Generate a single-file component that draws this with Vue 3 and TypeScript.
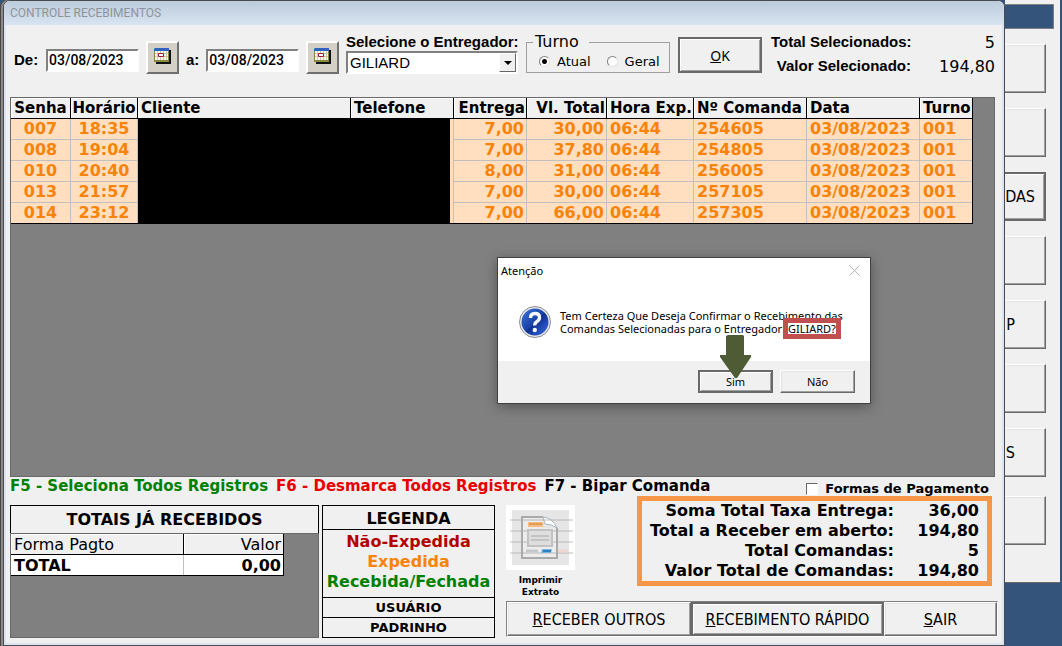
<script setup lang="ts">
import { ref } from 'vue'

interface Order {
  ticket: string
  time: string
  fee: string
  total: string
  dispatched: string
  number: string
  date: string
  shift: string
}

const orders: Order[] = [
  { ticket: '007', time: '18:35', fee: '7,00', total: '30,00', dispatched: '06:44', number: '254605', date: '03/08/2023', shift: '001' },
  { ticket: '008', time: '19:04', fee: '7,00', total: '37,80', dispatched: '06:44', number: '254805', date: '03/08/2023', shift: '001' },
  { ticket: '010', time: '20:40', fee: '8,00', total: '31,00', dispatched: '06:44', number: '256005', date: '03/08/2023', shift: '001' },
  { ticket: '013', time: '21:57', fee: '7,00', total: '30,00', dispatched: '06:44', number: '257105', date: '03/08/2023', shift: '001' },
  { ticket: '014', time: '23:12', fee: '7,00', total: '66,00', dispatched: '06:44', number: '257305', date: '03/08/2023', shift: '001' },
]

const summary = [
  { label: 'Soma Total Taxa Entrega:', value: '36,00' },
  { label: 'Total a Receber em aberto:', value: '194,80' },
  { label: 'Total Comandas:', value: '5' },
  { label: 'Valor Total de Comandas:', value: '194,80' },
]

const menu = ['', '', 'DAS', '', 'P', '', 'S', '']

const dateFrom = ref('03/08/2023')
const dateTo = ref('03/08/2023')
const courier = ref('GILIARD')
const shift = ref('atual')
const byPayment = ref(false)
</script>

<template>
  <div class="desktop">
    <main class="window">
      <header class="titlebar">CONTROLE RECEBIMENTOS</header>

      <form class="filters" @submit.prevent>
        <div class="dates">
          <label class="lbl" for="from">De:</label>
          <input id="from" v-model="dateFrom" class="sunken date" type="text" />
          <button class="calendar" type="button" aria-label="Escolher data inicial">
            <svg width="17" height="16" viewBox="0 0 17 16">
              <path d="M2 2h15v14H2z" fill="#111" />
              <path d="M0 1h15v13H0z" fill="#8a8a3c" />
              <path d="M1 3h13v9H1z" fill="#fffff0" />
              <path d="M0 1l1-1h14v3H0z" fill="#2f62c4" />
              <path d="M1 5.5h13M1 8.5h13M3.500 3v9M6.500 3v9M9.500 3v9M12.500 3v9" stroke="#c9c9a0" />
              <path d="M4.500 5.500h5v3h-5z" fill="#fff" stroke="#a81838" />
            </svg>
          </button>
          <label class="lbl" for="to">a:</label>
          <input id="to" v-model="dateTo" class="sunken date" type="text" />
          <button class="calendar" type="button" aria-label="Escolher data final">
            <svg width="17" height="16" viewBox="0 0 17 16">
              <path d="M2 2h15v14H2z" fill="#111" />
              <path d="M0 1h15v13H0z" fill="#8a8a3c" />
              <path d="M1 3h13v9H1z" fill="#fffff0" />
              <path d="M0 1l1-1h14v3H0z" fill="#2f62c4" />
              <path d="M1 5.5h13M1 8.5h13M3.500 3v9M6.500 3v9M9.500 3v9M12.500 3v9" stroke="#c9c9a0" />
              <path d="M4.500 5.500h5v3h-5z" fill="#fff" stroke="#a81838" />
            </svg>
          </button>
        </div>

        <div class="courier">
          <label class="lbl" for="courier">Selecione o Entregador:</label>
          <div class="combo sunken">
            <select id="courier" v-model="courier">
              <option>GILIARD</option>
            </select>
            <span class="drop" aria-hidden="true"><svg width="8" height="4" viewBox="0 0 8 4"><path d="M0 0h8L4 4z" fill="#000" /></svg></span>
          </div>
        </div>

        <fieldset class="shift">
          <legend>Turno</legend>
          <label><input v-model="shift" type="radio" name="shift" value="atual" />Atual</label>
          <label><input v-model="shift" type="radio" name="shift" value="geral" />Geral</label>
        </fieldset>

        <button class="btn default ok" type="submit"><span><u>O</u>K</span></button>

        <dl class="selected">
          <div><dt>Total Selecionados:</dt><dd>5</dd></div>
          <div><dt>Valor Selecionado:</dt><dd>194,80</dd></div>
        </dl>
      </form>

      <section class="orders">
        <table>
          <colgroup>
            <col class="w60" /><col class="w67" /><col /><col class="w103" /><col class="w73" />
            <col class="w80" /><col class="w87" /><col class="w113" /><col class="w113" /><col class="w53" />
          </colgroup>
          <thead>
            <tr>
              <th class="c">Senha</th><th class="c">Horário</th><th>Cliente</th><th>Telefone</th>
              <th class="r">Entrega</th><th class="r">Vl. Total</th><th>Hora Exp.</th>
              <th>Nº Comanda</th><th>Data</th><th>Turno</th>
            </tr>
          </thead>
          <tbody>
            <tr v-for="o in orders" :key="o.number">
              <td class="c">{{ o.ticket }}</td>
              <td class="c">{{ o.time }}</td>
              <td class="hidden"></td>
              <td class="hidden-part"></td>
              <td class="r">{{ o.fee }}</td>
              <td class="r">{{ o.total }}</td>
              <td>{{ o.dispatched }}</td>
              <td>{{ o.number }}</td>
              <td>{{ o.date }}</td>
              <td>{{ o.shift }}</td>
            </tr>
          </tbody>
        </table>
      </section>

      <div class="hints">
        <span class="green">F5 - Seleciona Todos Registros</span>
        <span class="red">F6 - Desmarca Todos Registros</span>
        <span>F7 - Bipar Comanda</span>
        <label class="payment"><input v-model="byPayment" type="checkbox" />Formas de Pagamento</label>
      </div>

      <footer class="bottom">
        <section class="received">
          <h2>TOTAIS JÁ RECEBIDOS</h2>
          <div class="received-body">
            <table>
              <thead><tr><th>Forma Pagto</th><th class="r">Valor</th></tr></thead>
              <tbody><tr><td>TOTAL</td><td class="r">0,00</td></tr></tbody>
            </table>
          </div>
        </section>

        <section class="key">
          <h2>LEGENDA</h2>
          <ul>
            <li class="dark-red">Não-Expedida</li>
            <li class="orange">Expedida</li>
            <li class="green">Recebida/Fechada</li>
          </ul>
          <p>USUÁRIO</p>
          <p>PADRINHO</p>
        </section>

        <section class="side">
          <div class="side-top">
            <button class="print" type="button">
              <svg width="69" height="65" viewBox="0 0 69 65">
                <path d="M0 0h69v65H0z" fill="#fff" />
                <path d="M6 5h57v55H6z" fill="#e6e6e6" />
                <path d="M16 12h24l11 10v31H16z" fill="#ececec" stroke="#aaa" stroke-width="2" />
                <path d="M37 11h15v12H37z" fill="#e6e6e6" />
                <path d="M37 12q10 1 14 11-5-4-12-4z" fill="#fff" stroke="#a9b4be" />
                <path d="M4 15h63M4 26h63M4 37h63M4 48h63" stroke="#aaa" stroke-opacity=".75" />
                <path d="M22 25h24v16H22z" fill="#dedede" stroke="#c2c2c2" stroke-width="2" />
                <path d="M25 31h18M25 35h18" stroke="#aaa" />
                <path d="M22 17h15v5H22z" fill="#f3bd83" />
                <path d="M23 19h13" stroke="#e59b50" stroke-width="2" />
                <path d="M36 44h10l-1 4H35z" fill="#79b4df" />
                <path d="M37 46h8" stroke="#2a82c5" stroke-width="2" />
                <path d="M20 46h12" stroke="#c4c8ca" stroke-width="3" />
                <path d="M52 46h10" stroke="#f1d5d0" stroke-width="3" />
              </svg>
              <span>Imprimir<br />Extrato</span>
            </button>
            <table class="summary">
              <tbody>
                <tr v-for="s in summary" :key="s.label">
                  <th scope="row">{{ s.label }}</th>
                  <td>{{ s.value }}</td>
                </tr>
              </tbody>
            </table>
          </div>
          <div class="actions">
            <button class="btn others" type="button"><span><u>R</u>ECEBER OUTROS</span></button>
            <button class="btn default quick" type="button"><span><u>R</u>ECEBIMENTO RÁPIDO</span></button>
            <button class="btn exit" type="button"><span><u>S</u>AIR</span></button>
          </div>
        </section>
      </footer>

      <div class="dialog" role="dialog" aria-labelledby="dialog-title">
        <div class="dialog-title">
          <span id="dialog-title">Atenção</span>
          <button type="button" aria-label="Fechar">
            <svg width="11" height="11" viewBox="0 0 11 11"><path d="M.5.5l10 10M10.500.5l-10 10" stroke="#b4b4b4" /></svg>
          </button>
        </div>
        <div class="dialog-body">
          <svg width="32" height="32" viewBox="0 0 32 32">
            <defs>
              <linearGradient id="ball" x1="0" y1="0" x2="1" y2="1">
                <stop offset="0" stop-color="#3d77dc" />
                <stop offset=".5" stop-color="#1740a6" />
                <stop offset=".52" stop-color="#0f2f8c" />
                <stop offset="1" stop-color="#3f6ff0" />
              </linearGradient>
            </defs>
            <circle cx="16" cy="16" r="15.500" fill="#e9ebee" stroke="#8a8d94" />
            <circle cx="16" cy="16" r="13.500" fill="url(#ball)" />
            <path d="M11.500 12q0-4.500 4.500-4.500t4.500 4q0 2.500-2.500 4t-2.200 4" fill="none" stroke="#f4f6fa" stroke-width="3.400" />
            <circle cx="15.800" cy="24" r="2.200" fill="#f4f6fa" />
          </svg>
          <p>Tem Certeza Que Deseja Confirmar o Recebimento das<br />Comandas Selecionadas para o Entregador: <span class="name">GILIARD?</span></p>
        </div>
        <div class="dialog-actions">
          <button class="btn default" type="button">Sim</button>
          <button class="btn" type="button">Não</button>
        </div>
        <svg class="arrow" width="32" height="44" viewBox="0 0 32 44"><path d="M8 0h15l1 1v19h7v2L17 43h-2L0 22v-2h6V1z" fill="#4f5b35" /></svg>
      </div>
    </main>

    <aside class="behind">
      <div class="behind-panel">
        <div class="band"></div>
        <button v-for="(m, i) in menu" :key="i" class="btn" :class="{ default: m === 'DAS' }" type="button"><span>{{ m }}</span></button>
      </div>
    </aside>
  </div>
</template>

<style>
body {
  margin: 0;
}
</style>

<style scoped>
* {
  box-sizing: border-box;
}
.desktop {
  display: grid;
  grid-template-columns: minmax(0, 1fr) 57px;
  min-height: 100vh;
  background: #34547c;
  color: #000;
  font-family: "DejaVu Sans", sans-serif;
}
.window {
  position: relative;
  display: flex;
  flex-direction: column;
  margin-left: 3px;
  padding: 0 9px 7px 6px;
  background: #f0f0f0;
  border: 1px solid #4a4a52;
  border-radius: 7px 7px 0 0;
  box-shadow: inset -2px -2px #dbe5f2, inset 2px 0 #dbe5f2, -2px 0 #8b8888, -3px 0 #4a4646;
}
.titlebar {
  height: 24px;
  margin: 0 -9px 0 -6px;
  padding-left: 6px;
  border-radius: 6px 6px 0 0;
  background: linear-gradient(#bccbdb, #d8e4f1);
  color: #8f9499;
  font: 12px/25px "Roboto", sans-serif;
}
h2, p, ul, dl, dd {
  margin: 0;
  padding: 0;
}
button, input, select {
  margin: 0;
  color: #000;
  font-family: inherit;
}
.btn {
  padding: 0;
  background: #f0f0f0;
  border: 1px solid;
  border-color: #fff #696969 #696969 #fff;
  border-radius: 0;
  box-shadow: inset -1px -1px #a0a0a0, inset 1px 1px #e3e3e3;
}
.btn.default {
  border: 2px solid #696969;
  box-shadow: inset 1px 1px #fff, inset -1px -1px #a0a0a0;
}
.lbl {
  font: bold 15px/16px "Liberation Sans", sans-serif;
}
.sunken {
  border: 2px solid;
  border-color: #808080 #fff #fff #808080;
  border-radius: 0;
  background: #fff;
}
.filters {
  display: flex;
  align-items: flex-start;
  height: 72px;
  padding: 9px 0 0 4px;
}
.dates {
  display: flex;
  align-items: center;
  gap: 7px;
  height: 52px;
  width: 332px;
}
.dates .lbl:first-child {
  min-width: 25px;
}
.date {
  width: 93px;
  height: 23px;
  padding: 0 1px;
  font: 500 14px "Roboto", sans-serif;
}
.calendar {
  display: grid;
  place-items: center;
  width: 33px;
  height: 33px;
  margin-top: -5px;
  padding: 0 0 4px;
  background: #d4d0c8;
  border: 2px solid;
  border-color: #fff #707070 #707070 #fff;
}
.courier {
  width: 180px;
  margin-top: -2px;
}
.combo {
  position: relative;
  width: 172px;
  height: 23px;
}
.combo select {
  width: 100%;
  height: 19px;
  padding: 0 2px;
  appearance: none;
  border: 0;
  background: transparent;
  font: 15px "Liberation Sans", sans-serif;
}
.drop {
  position: absolute;
  top: 0;
  right: 0;
  display: grid;
  place-items: center;
  width: 17px;
  height: 19px;
  background: #f0f0f0;
  border: 1px solid;
  border-color: #fff #696969 #696969 #fff;
  pointer-events: none;
}
.shift {
  display: flex;
  gap: 16px;
  width: 144px;
  height: 40px;
  margin: -1px 8px 0 0;
  padding: 0 0 0 12px;
  border: 1px solid #a0a0a0;
}
.shift legend {
  margin-left: -6px;
  padding: 0 10px 0 2px;
  font-size: 16px;
  line-height: 18px;
}
.shift label {
  display: flex;
  align-items: center;
  gap: 7px;
  height: 20px;
  font-size: 13px;
}
.shift input {
  width: 11px;
  height: 11px;
  appearance: none;
  background: #fff;
  border: 1px solid;
  border-color: #808080 #e3e3e3 #e3e3e3 #808080;
  border-radius: 50%;
}
.shift input:checked {
  background: radial-gradient(circle, #000 2px, #fff 3px);
}
.ok {
  width: 84px;
  height: 36px;
  margin-top: 3px;
  font: 14px "Noto Sans", sans-serif;
}
.selected {
  flex: 1;
  padding-left: 9px;
}
.selected div {
  display: flex;
  justify-content: space-between;
  height: 24px;
}
.selected dt {
  width: 140px;
  text-align: right;
  white-space: nowrap;
  font: bold 15px/16px "Liberation Sans", sans-serif;
}
.selected dd {
  font-size: 16px;
  line-height: 18px;
}
.orders {
  flex: 1;
  min-height: 380px;
  background: #808080;
  border: 1px solid #696969;
}
table {
  border-collapse: separate;
  border-spacing: 0;
}
.orders table {
  width: calc(100% - 21px);
  table-layout: fixed;
  border-bottom: 1px solid #000;
  border-right: 1px solid #000;
}
.w60 { width: 60px; }
.w67 { width: 67px; }
.w103 { width: 103px; }
.w73 { width: 73px; }
.w80 { width: 80px; }
.w87 { width: 87px; }
.w113 { width: 113px; }
.w53 { width: 52px; }
.orders th, .orders td {
  height: 21px;
  padding: 0 2px 0 3px;
  text-align: left;
  white-space: nowrap;
  font-weight: bold;
}
.orders th {
  padding-right: 1px;
  background: #f0f0f0;
  border-right: 1px solid #000;
  border-bottom: 1px solid #000;
  box-shadow: inset 1px 1px #fff;
  font-size: 15px;
  line-height: 20px;
}
.orders td {
  background: #ffdfbf;
  border-right: 1px solid #c0c0c0;
  border-bottom: 1px solid #c0c0c0;
  color: #f7830b;
  font-size: 16px;
  line-height: 20px;
}
.orders th:last-child, .orders td:last-child {
  border-right: 0;
}
.orders tbody tr:last-child td {
  height: 20px;
  border-bottom: 0;
}
.orders .c { text-align: center; padding: 0; }
.orders .r { text-align: right; }
.orders td.hidden {
  background: #000;
  border-color: #000;
}
.orders td.hidden-part {
  border-bottom: 0;
  background: linear-gradient(#000, #000) left / calc(100% - 3px) 100% no-repeat, #ffdfbf;
}
.hints {
  display: flex;
  gap: 8px;
  height: 19px;
  font-size: 15px;
  font-weight: bold;
  line-height: 18px;
  white-space: nowrap;
}
.payment {
  display: flex;
  align-items: center;
  gap: 7px;
  height: 22px;
  margin: 1px 6px 0 auto;
  font-size: 13px;
}
.payment input {
  width: 12px;
  height: 12px;
  appearance: none;
  background: #fff;
  border: 1px solid;
  border-color: #696969 #fff #fff #696969;
}
.green { color: #008000; }
.red { color: #e60000; }
.dark-red { color: #b40000; }
.orange { color: #f7830b; }
.bottom {
  display: flex;
  align-items: flex-end;
  height: 142px;
}
.received {
  display: flex;
  flex-direction: column;
  width: 309px;
  height: 133px;
  margin-right: 3px;
}
.received h2 {
  height: 28px;
  border: 1px solid #000;
  border-bottom: 0;
  text-align: center;
  font-size: 16px;
  line-height: 28px;
}
.received-body {
  flex: 1;
  background: #808080;
  border: 1px solid #696969;
}
.received table {
  width: 273px;
  table-layout: fixed;
  border-right: 1px solid #000;
  border-bottom: 1px solid #000;
}
.received th, .received td {
  height: 21px;
  padding: 0 2px 0 3px;
  text-align: left;
  font-size: 16px;
  line-height: 19px;
}
.received td {
  height: 20px;
}
.received th {
  background: #f0f0f0;
  border-bottom: 1px solid #000;
  box-shadow: inset 1px 1px #fff;
  font-weight: normal;
}
.received th:first-child {
  width: 173px;
  border-right: 1px solid #000;
}
.received td {
  background: #fff;
  font-weight: bold;
}
.received td:first-child {
  border-right: 1px solid #c0c0c0;
}
.received .r { text-align: right; }
.key {
  width: 173px;
  height: 133px;
  margin-right: 11px;
  border: 1px solid #000;
  text-align: center;
  font-weight: bold;
  white-space: nowrap;
}
.key h2 {
  height: 24px;
  font-size: 16px;
  line-height: 25px;
  border-bottom: 1px solid #000;
}
.key ul {
  height: 67px;
  padding-top: 2px;
  list-style: none;
  font-size: 16px;
  line-height: 20px;
}
.key p {
  height: 20px;
  border-top: 1px solid #000;
  font-size: 13px;
  line-height: 20px;
}
.side {
  display: flex;
  flex-direction: column;
  flex: 1;
  min-width: 0;
  height: 142px;
}
.side-top {
  display: flex;
  justify-content: space-between;
  align-items: flex-start;
  height: 105px;
}
.print {
  margin-top: 9px;
  padding: 0;
  border: 0;
  background: transparent;
  font-size: 9px;
  font-weight: bold;
  line-height: 12px;
}
.print svg {
  display: block;
  margin-bottom: 4px;
}
.summary {
  position: relative;
  width: 355px;
  margin-right: 3px;
  border: 5px solid #f79646;
  background: #f0f0f0;
  font-size: 16px;
  font-weight: bold;
  line-height: 20px;
}
.summary th, .summary td {
  height: 20px;
  padding: 0;
  text-align: right;
  white-space: nowrap;
}
.summary td {
  width: 93px;
  padding-right: 8px;
}
.actions {
  display: flex;
  height: 36px;
  margin-right: -3px;
  border: 1px solid;
  border-color: #808080 #fff #fff #808080;
}
.actions .btn {
  font: 16px "DejaVu Sans Condensed", "DejaVu Sans", sans-serif;
}
.others { flex: 185; }
.quick { flex: 192; }
.exit { flex: 113; }
.dialog {
  position: absolute;
  top: 256px;
  left: 493px;
  width: 374px;
  background: #fff;
  border: 1px solid #404040;
  box-shadow: 0 3px 12px rgba(0, 0, 0, .35);
  font: 11px/13px "Noto Sans", sans-serif;
}
.dialog-title {
  display: flex;
  justify-content: space-between;
  align-items: center;
  height: 24px;
  padding: 0 10px 0 3px;
}
.dialog-title button {
  display: grid;
  padding: 0;
  border: 0;
  background: transparent;
}
.dialog-body {
  display: flex;
  gap: 9px;
  height: 79px;
  padding: 24px 0 0 21px;
}
.dialog-body p {
  padding-top: 3px;
  white-space: nowrap;
}
.name {
  position: relative;
}
.name::after {
  content: "";
  position: absolute;
  inset: -3px -5px -3px -5px;
  border: 5px solid #c0504d;
}
.dialog-actions {
  display: flex;
  justify-content: flex-end;
  gap: 7px;
  height: 42px;
  padding: 9px 15px 10px;
  background: #f0f0f0;
}
.dialog-actions .btn {
  width: 75px;
  font-size: 11px;
}
.arrow {
  position: absolute;
  top: 77px;
  left: 222px;
}
.behind {
  overflow: hidden;
}
.behind-panel {
  height: 583px;
  padding: 4px 6px 0 0;
  margin-right: 2px;
  background: #f0f0f0;
  border-bottom: 1px solid #696969;
  display: flex;
  flex-direction: column;
  gap: 15px;
}
.band {
  flex: none;
  height: 25px;
  background: #34547c;
  border: 1px solid #808080;
  border-left: 0;
}
.behind .btn {
  flex: none;
  width: 120px;
  height: 49px;
  margin-left: -79px;
  padding-right: 9px;
  text-align: right;
  font: 16px "DejaVu Sans Condensed", sans-serif;
}
.behind .btn:nth-of-type(5), .behind .btn:nth-of-type(7) { padding-right: 30px; }
.behind .btn:nth-of-type(8) { margin-top: 4px; }
</style>
